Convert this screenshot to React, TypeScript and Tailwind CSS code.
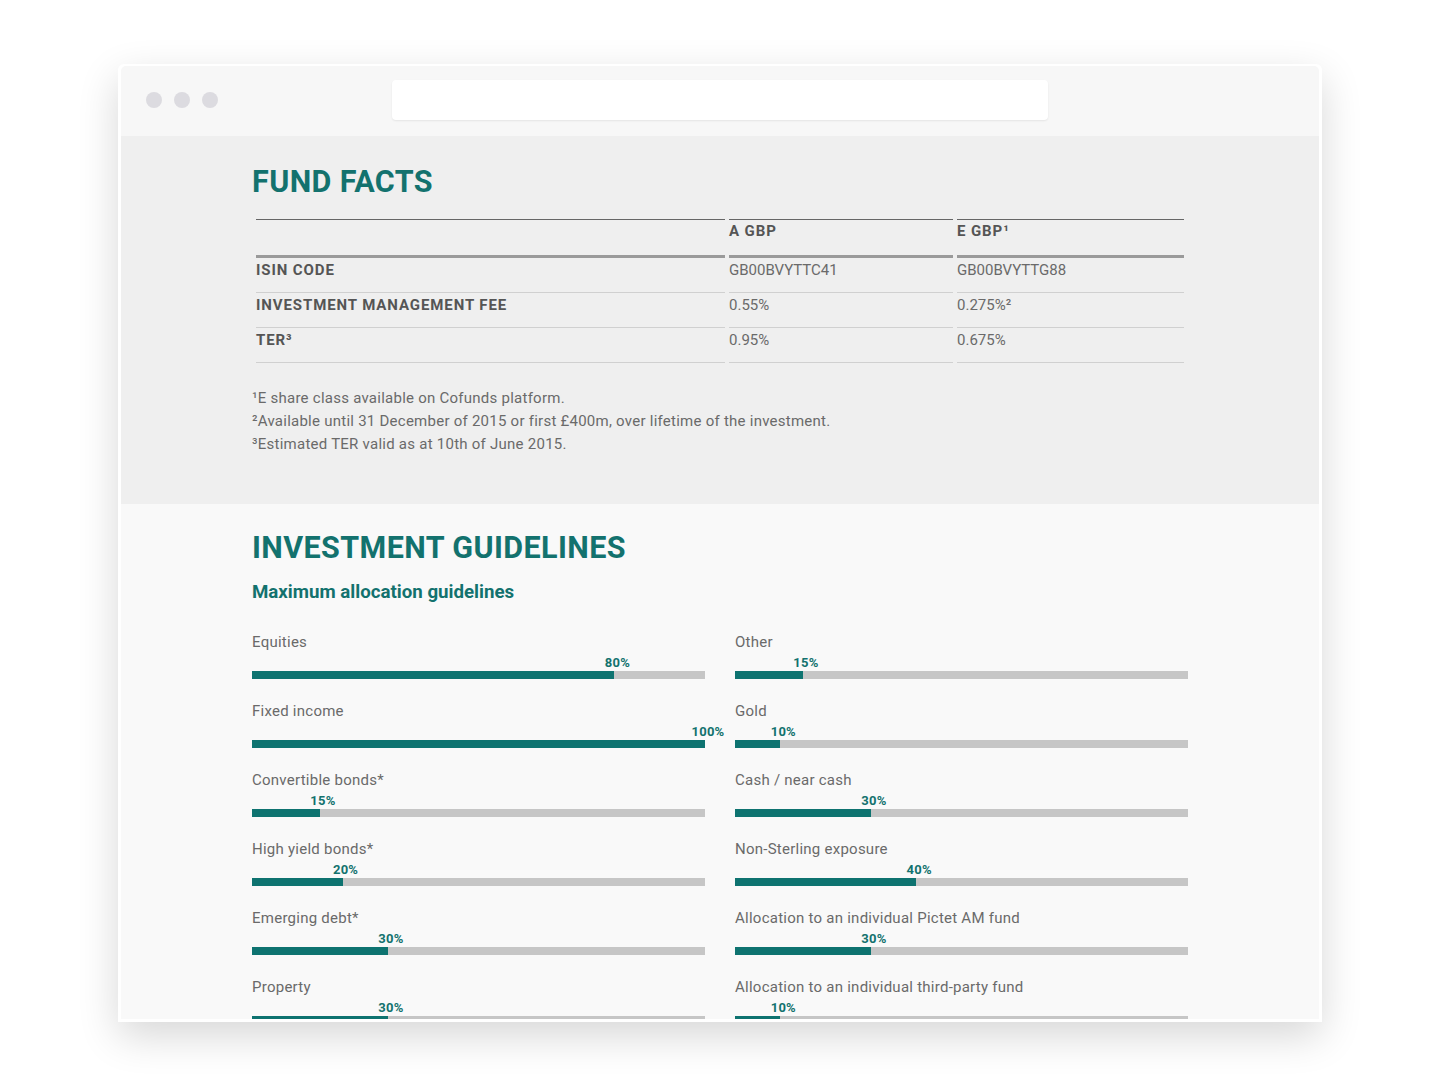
const teal = "text-[#13726e]";

type Bar = { label: string; pct: number };

const leftBars: Bar[] = [
  { label: "Equities", pct: 80 },
  { label: "Fixed income", pct: 100 },
  { label: "Convertible bonds*", pct: 15 },
  { label: "High yield bonds*", pct: 20 },
  { label: "Emerging debt*", pct: 30 },
  { label: "Property", pct: 30 },
];

const rightBars: Bar[] = [
  { label: "Other", pct: 15 },
  { label: "Gold", pct: 10 },
  { label: "Cash / near cash", pct: 30 },
  { label: "Non-Sterling exposure", pct: 40 },
  { label: "Allocation to an individual Pictet AM fund", pct: 30 },
  { label: "Allocation to an individual third-party fund", pct: 10 },
];

const rows = [
  { name: "ISIN CODE", a: "GB00BVYTTC41", e: "GB00BVYTTG88" },
  { name: "INVESTMENT MANAGEMENT FEE", a: "0.55%", e: "0.275%²" },
  { name: "TER³", a: "0.95%", e: "0.675%" },
];

function AllocationBar({ label, pct }: Bar) {
  return (
    <div className="pb-[22px]">
      <div className="text-[15px] leading-5 tracking-[0.25px] text-[#6a6a6a]">{label}</div>
      <div className="relative mt-[4px] h-[14px]">
        <span
          className={`absolute top-0 ml-[3px] -translate-x-1/2 text-[13px] font-bold leading-[14px] tracking-[0.2px] ${teal}`}
          style={{ left: `${pct}%` }}
        >
          {pct}%
        </span>
      </div>
      <div className="mt-[1px] h-[8px] bg-[#c6c6c6]">
        <div className="h-full bg-[#0e7370]" style={{ width: `${pct}%` }} />
      </div>
    </div>
  );
}

function FundFacts() {
  return (
    <section className="bg-[#efefef] pb-[48px] pt-[26px]">
      <div className="mx-auto w-[936px]">
        <h2 className={`text-[30.5px] font-bold leading-[40px] tracking-[0.4px] ${teal}`}>FUND FACTS</h2>

        <div className="mx-1 mt-[17px] grid grid-cols-[469px_224px_1fr] gap-x-1 text-[15px] leading-5">
          <div className="h-[39px] border-b-[3px] border-t border-b-[#9a9a9a] border-t-[#666]" />
          <div className="h-[39px] border-b-[3px] border-t border-b-[#9a9a9a] border-t-[#666] pt-[1px] font-bold tracking-[0.9px] text-[#555]">
            A GBP
          </div>
          <div className="h-[39px] border-b-[3px] border-t border-b-[#9a9a9a] border-t-[#666] pt-[1px] font-bold tracking-[0.9px] text-[#555]">
            E GBP¹
          </div>

          {rows.map((r) => (
            <div key={r.name} className="contents">
              <div className="h-[35px] border-b border-[#d0d0d0] pt-[2px] font-bold tracking-[0.9px] text-[#555]">
                {r.name}
              </div>
              <div className="h-[35px] border-b border-[#d0d0d0] pt-[2px] text-[#6a6a6a]">{r.a}</div>
              <div className="h-[35px] border-b border-[#d0d0d0] pt-[2px] text-[#6a6a6a]">{r.e}</div>
            </div>
          ))}
        </div>

        <div className="mt-[24px] text-[15px] leading-[23px] tracking-[0.25px] text-[#6a6a6a]">
          <p>¹E share class available on Cofunds platform.</p>
          <p>²Available until 31 December of 2015 or first £400m, over lifetime of the investment.</p>
          <p>³Estimated TER valid as at 10th of June 2015.</p>
        </div>
      </div>
    </section>
  );
}

function Guidelines() {
  return (
    <section className="flex-1 bg-[#f9f9f9] pt-[24px]">
      <div className="mx-auto w-[936px]">
        <h2 className={`text-[30.5px] font-bold leading-[40px] tracking-[0.4px] ${teal}`}>INVESTMENT GUIDELINES</h2>
        <h3 className={`mt-[12px] text-[18.7px] font-bold leading-6 ${teal}`}>Maximum allocation guidelines</h3>

        <div className="mt-[28px] grid grid-cols-2 gap-x-[30px]">
          <div>
            {leftBars.map((b) => (
              <AllocationBar key={b.label} {...b} />
            ))}
          </div>
          <div>
            {rightBars.map((b) => (
              <AllocationBar key={b.label} {...b} />
            ))}
          </div>
        </div>
      </div>
    </section>
  );
}

export default function App() {
  return (
    <div className="min-h-[1088px] bg-white pt-[64px]" style={{ fontFamily: "Roboto, 'Noto Sans', sans-serif" }}>
      <div className="mx-auto flex h-[958px] w-[1204px] flex-col rounded-t-[6px] bg-white px-[3px] pb-[3px] pt-[2px] shadow-[0_14px_40px_rgba(0,0,0,0.16)]">
        <header className="grid h-[70px] shrink-0 grid-cols-[1fr_656px_1fr] items-center rounded-t-[5px] bg-[#f7f7f7] pb-[2px]">
          <div className="flex gap-3 pl-[25px]">
            <span className="size-4 rounded-full bg-[#dcdbe0]" />
            <span className="size-4 rounded-full bg-[#dcdbe0]" />
            <span className="size-4 rounded-full bg-[#dcdbe0]" />
          </div>
          <div className="h-10 rounded bg-white shadow-[0_1px_2px_rgba(0,0,0,0.08)]" />
          <div />
        </header>
        <main className="flex flex-1 flex-col overflow-hidden">
          <FundFacts />
          <Guidelines />
        </main>
      </div>
    </div>
  );
}
